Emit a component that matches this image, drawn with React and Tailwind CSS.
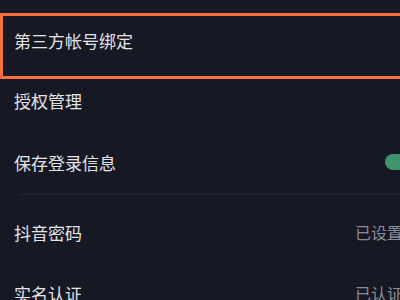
import React from "react";

const font = { fontFamily: '"Noto Sans CJK SC", "Noto Sans", sans-serif' };

function Row({ label, right, className = "" }) {
  return (
    <div className={`flex items-center justify-between pl-[14px] ${className}`}>
      <span className="text-[17px] leading-none text-[#e4e4e8]">{label}</span>
      {right}
    </div>
  );
}

export default function App() {
  return (
    <div className="relative w-[400px] h-[300px] overflow-hidden bg-[#161824]" style={font}>
      {/* 标注框 */}
      <div className="absolute left-0 top-[13px] w-[410px] h-[66px] border-[3px] border-[#f7703f]" />

      <div className="pt-[10px]">
        <Row label="第三方帐号绑定" className="h-[60px]" />
        <Row label="授权管理" className="h-[60px]" />
        <Row
          label="保存登录信息"
          className="h-[64px]"
          right={<div className="w-[40px] h-[16px] mr-[-25px] rounded-full bg-[#3e946b]" />}
        />
        <div className="ml-[20px] h-px bg-[#242633]" />
        <Row
          label="抖音密码"
          className="h-[74px]"
          right={<span className="text-[16px] leading-none text-[#8b8d96] mr-[-3px]">已设置</span>}
        />
        <Row
          label="实名认证"
          className="h-[48px]"
          right={<span className="text-[16px] leading-none text-[#8b8d96] mr-[-3px]">已认证</span>}
        />
      </div>
    </div>
  );
}
